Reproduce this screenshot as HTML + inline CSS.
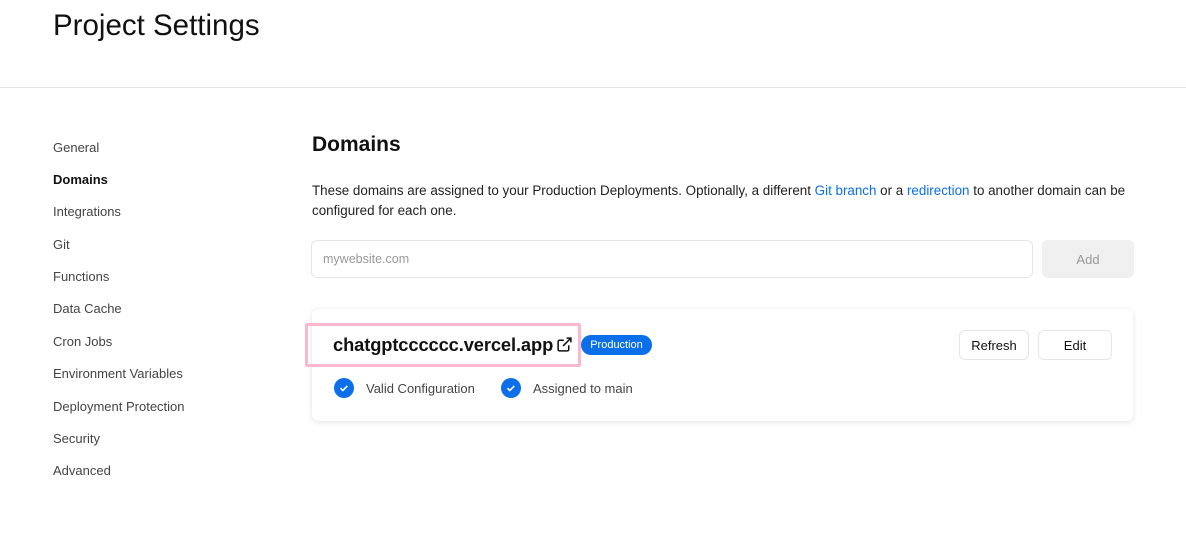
<!DOCTYPE html>
<html><head><style>
*{margin:0;padding:0;box-sizing:border-box}
body{width:1186px;height:554px;background:#fff;font-family:"Liberation Sans",sans-serif;color:#111;position:relative;overflow:hidden}
.a{position:absolute;white-space:nowrap}
.nav{left:53px;font-size:13px;color:#444}
.lnk{color:#0a6fe8}
.btn{position:absolute;border:1px solid #e6e6e6;border-radius:6px;font-size:13px;display:flex;align-items:center;justify-content:center;background:#fff}
.chk{position:absolute;width:20px;height:20px;border-radius:50%;background:#0a6fe8}
</style></head><body>
<div class="a" style="left:53px;top:9px;font-size:29.5px;color:#111">Project Settings</div>
<div class="a" style="left:0;top:87px;width:1186px;height:1px;background:#e5e5e5"></div>
<div class="a nav" style="top:140px">General</div>
<div class="a nav" style="top:172px;color:#111;font-weight:bold">Domains</div>
<div class="a nav" style="top:204px">Integrations</div>
<div class="a nav" style="top:237px">Git</div>
<div class="a nav" style="top:269px">Functions</div>
<div class="a nav" style="top:301px">Data Cache</div>
<div class="a nav" style="top:334px">Cron Jobs</div>
<div class="a nav" style="top:366px">Environment Variables</div>
<div class="a nav" style="top:399px">Deployment Protection</div>
<div class="a nav" style="top:431px">Security</div>
<div class="a nav" style="top:463px">Advanced</div>
<div class="a" style="left:312px;top:133px;font-size:21px;font-weight:bold">Domains</div>
<div class="a" style="left:312px;top:181px;font-size:13.4px;line-height:20px;color:#222">These domains are assigned to your Production Deployments. Optionally, a different <span class="lnk">Git branch</span> or a <span class="lnk">redirection</span> to another domain can be<br>configured for each one.</div>
<div class="a" style="left:311px;top:240px;width:722px;height:38px;border:1px solid #e6e6e6;border-radius:6px;font-size:12.5px;color:#999;padding:11px 0 0 11px">mywebsite.com</div>
<div class="btn" style="left:1042px;top:240px;width:92px;height:38px;background:#f0f0f0;border-color:#f0f0f0;color:#999">Add</div>
<div class="a" style="left:312px;top:309px;width:821px;height:112px;border-radius:6px;box-shadow:0 1px 6px rgba(0,0,0,.12)"></div>
<div class="a" style="left:305px;top:323px;width:276px;height:44px;border:3px solid #fbb6d0;border-radius:2px"></div>
<div class="a" style="left:333px;top:334px;font-size:18.3px;font-weight:bold;color:#111;letter-spacing:-0.1px">chatgptcccccc.vercel.app</div>
<svg class="a" style="left:556px;top:336px" width="17" height="17" viewBox="0 0 24 24" fill="none" stroke="#111" stroke-width="2.2"><path d="M18 13v6a2 2 0 0 1-2 2H5a2 2 0 0 1-2-2V8a2 2 0 0 1 2-2h6M15 3h6v6M10 14L21 3"/></svg>
<div class="a" style="left:581px;top:335px;height:20px;width:71px;border-radius:10px;background:#0a6fe8;color:#fff;font-size:11px;text-align:center;line-height:20px">Production</div>
<div class="btn" style="left:959px;top:330px;width:70px;height:30px">Refresh</div>
<div class="btn" style="left:1038px;top:330px;width:74px;height:30px">Edit</div>
<div class="chk" style="left:334px;top:378px"><svg width="20" height="20" viewBox="0 0 20 20"><path d="M6.5 10.2l2.3 2.3 4.5-4.6" stroke="#fff" stroke-width="1.6" fill="none"/></svg></div>
<div class="a" style="left:366px;top:381px;font-size:13px;color:#444">Valid Configuration</div>
<div class="chk" style="left:501px;top:378px"><svg width="20" height="20" viewBox="0 0 20 20"><path d="M6.5 10.2l2.3 2.3 4.5-4.6" stroke="#fff" stroke-width="1.6" fill="none"/></svg></div>
<div class="a" style="left:533px;top:381px;font-size:13px;color:#444">Assigned to main</div>
</body></html>
